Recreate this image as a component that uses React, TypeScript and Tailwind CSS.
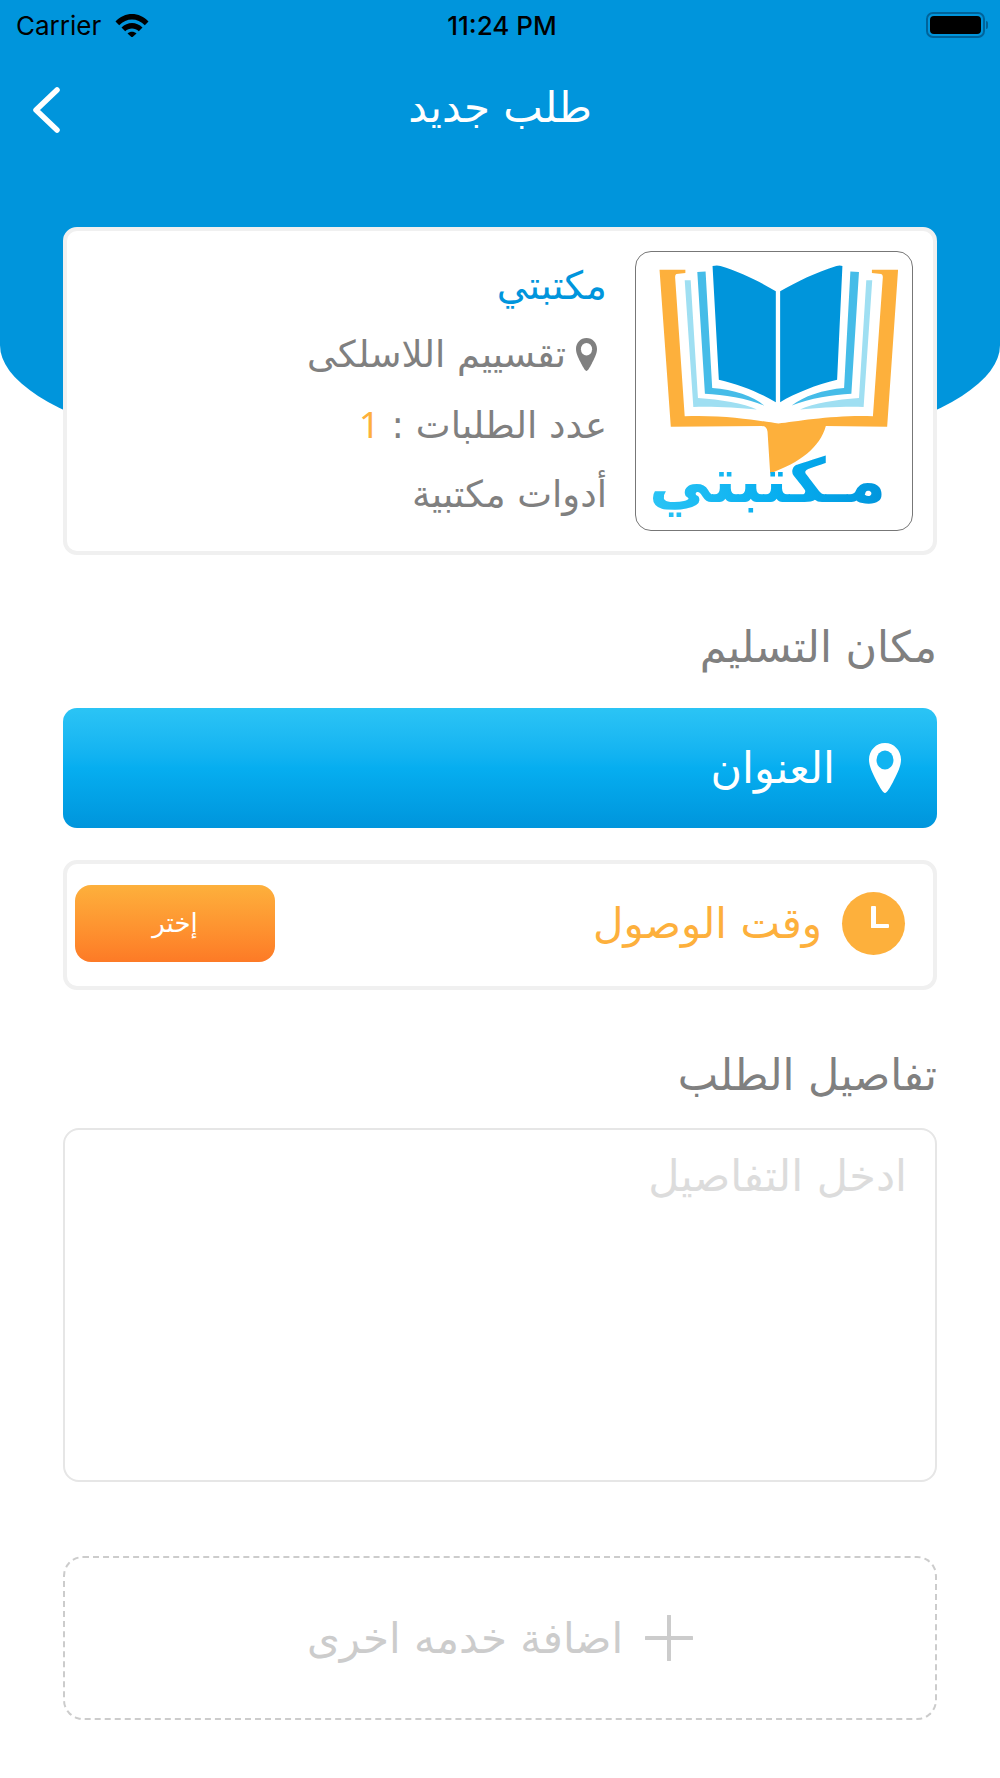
const Pin = ({ className, hole }: { className: string; hole: string }) => (
    <svg viewBox="0 0 32 50" className={className}>
        <path d="M16 0C7 0 0 7.500 0 16.500c0 8 5 16 8 22.500 3 5.500 6 11 8 11 2 0 5-5.500 8-11 3-6.500 8-14.500 8-22.500C32 7.500 25 0 16 0z" fill="currentColor" />
        <ellipse cx="16" cy="17" rx="8.500" ry="9.500" fill={hole} />
    </svg>
);

const StatusBar = () => (
    <div dir="ltr" className="flex h-[50px] items-center justify-between pl-[16px] pr-[12px] text-[26px] text-black font-['Inter',sans-serif]">
        <div className="flex w-[300px] items-center gap-[14px]">
            <span>Carrier</span>
            <svg viewBox="0 0 34 24" className="h-[24px] w-[34px]">
                <path d="M0.500 8.500C9.500-1.500 24.500-1.500 33.500 8.500L29.800 12.300C22.500 4.500 11.500 4.500 4.200 12.300z" fill="#000" />
                <path d="M6.500 14.500C12.500 8.500 21.500 8.500 27.500 14.500L23.800 18.200C20 14.500 14 14.500 10.200 18.200z" fill="#000" />
                <path d="M12.500 20.500C15 18.300 19 18.300 21.500 20.500L17 24.500z" fill="#000" />
            </svg>
        </div>
        <span className="font-medium">11:24 PM</span>
        <div className="flex w-[300px] items-center justify-end">
            <div className="flex h-[26px] w-[59px] items-center rounded-[7px] border-2 border-[#00639a] p-[2px]">
                <div className="h-full w-full rounded-[4px] bg-black" />
            </div>
            <div className="ml-[1px] h-[8px] w-[2px] rounded-r-sm bg-[#00639a]" />
        </div>
    </div>
);

const Logo = () => (
    <svg viewBox="75 80 833 838" className="h-full w-full">
        <defs>
            <linearGradient id="logoText" x1="0" x2="1" y1="0" y2="0">
                <stop offset="0" stopColor="#2bc4f5" />
                <stop offset="0.55" stopColor="#06aef0" />
                <stop offset="1" stopColor="#0095dc" />
            </linearGradient>
        </defs>
        <path
            d="M146 133L224 133L224 143L197 146Q193 147 193 155L222 575C350 570 450 590 505 597C560 590 680 570 790 575L820 155Q820 147 815 146L787 143L787 133L866 133L833 607L648 605C630 670 570 715 480 748L472 622Q470 605 455 605L180 607z"
            fill="#fdb03c"
        />
        <path d="M222 165L240 165L262 520C330 525 400 535 440 555C380 548 300 545 248 547z" fill="#9fdff2" />
        <path d="M788 165L770 165L748 520C680 525 610 535 570 555C630 548 710 545 762 547z" fill="#9fdff2" />
        <path d="M260 140L285 138L305 490C370 495 430 515 462 543C410 520 340 510 283 507z" fill="#45bce8" />
        <path d="M748 140L722 138L703 490C640 495 580 515 545 543C600 520 670 510 725 507z" fill="#45bce8" />
        <path d="M306 122Q320 118 330 122C390 140 450 170 497 198L497 533C450 505 390 480 325 465z" fill="#0095db" />
        <path d="M698 122Q690 118 680 122C620 140 560 170 510 198L510 533C555 505 620 480 682 465z" fill="#0095db" />
        <text
            x="472"
            y="835"
            textAnchor="middle"
            textLength="715"
            lengthAdjust="spacingAndGlyphs"
            fontSize="185"
            fontWeight="700"
            fontFamily="'DejaVu Sans', sans-serif"
            fill="url(#logoText)"
        >
            مـكتبتي
        </text>
    </svg>
);

const App = () => {
    return (
        <div dir="rtl" className="relative h-[1778px] w-full overflow-hidden bg-white font-['DejaVu_Sans',sans-serif]">
            {/* 상단 배경 */}
            <div className="absolute inset-x-0 top-0 h-[478px] rounded-b-[50%_133px] bg-[#0095dc]" />

            <div className="relative">
                <StatusBar />

                <div className="relative flex h-[115px] items-center justify-center text-[42px] text-white">
                    <span>طلب جديد</span>
                    <svg viewBox="0 0 28 46" className="absolute left-[32px] top-[37px] h-[46px] w-[28px]">
                        <path d="M25 3L4 23L25 43" fill="none" stroke="#fff" strokeWidth="5.500" strokeLinecap="round" strokeLinejoin="round" />
                    </svg>
                </div>

                <div className="flex flex-col px-[63px] pt-[62px]">
                    {/* 상점 카드 */}
                    <div className="flex h-[328px] gap-[28px] rounded-[14px] border-4 border-[#f0f0f0] bg-white p-[20px]">
                        <div className="h-[280px] w-[278px] shrink-0 overflow-hidden rounded-[16px] border border-[#777] bg-white">
                            <Logo />
                        </div>
                        <div className="flex flex-col text-[37px] leading-[69px] text-[#808080]">
                            <div className="text-[39px] text-[#0095dc]">مكتبتي</div>
                            <div className="flex items-center gap-[10px] pr-[10px]">
                                <Pin className="h-[33px] w-[21px] text-[#808080]" hole="#fff" />
                                <span>تقسييم اللاسلكى</span>
                            </div>
                            <div>
                                عدد الطلبات : <span className="font-['Noto_Sans',sans-serif] text-[#fdb03c]">1</span>
                            </div>
                            <div>أدوات مكتبية</div>
                        </div>
                    </div>

                    <h2 className="mt-[62px] text-[43px] leading-[60px] text-[#808080]">مكان التسليم</h2>

                    {/* 주소 버튼 */}
                    <div className="mt-[31px] flex h-[120px] items-center gap-[34px] rounded-[14px] bg-gradient-to-b from-[#2bc4f5] via-[#06aef0] to-[#0095dc] pr-[36px] text-[43px] text-white">
                        <Pin className="h-[50px] w-[32px] text-white" hole="#12b4f1" />
                        <span>العنوان</span>
                    </div>

                    {/* 도착 시간 */}
                    <div className="mt-[32px] flex h-[130px] items-center justify-between rounded-[14px] border-4 border-[#f0f0f0] pb-[4px] pl-[8px] pr-[28px]">
                        <div className="flex items-center gap-[20px]">
                            <div className="relative h-[63px] w-[63px] rounded-full bg-[#fdb03c]">
                                <div className="absolute left-[29px] top-[14px] h-[22px] w-[5px] rounded-[1px] bg-white" />
                                <div className="absolute left-[29px] top-[32px] h-[4px] w-[18px] rounded-[1px] bg-white" />
                            </div>
                            <span className="text-[42px] text-[#fdb03c]">وقت الوصول</span>
                        </div>
                        <button className="flex h-[77px] w-[200px] items-center justify-center rounded-[16px] bg-gradient-to-b from-[#fdb03c] to-[#fd7a26] text-[26px] text-white">
                            إختر
                        </button>
                    </div>

                    <h2 className="mt-[55px] text-[43px] leading-[60px] text-[#808080]">تفاصيل الطلب</h2>

                    {/* 상세 입력 */}
                    <textarea
                        placeholder="ادخل التفاصيل"
                        className="mt-[23px] h-[354px] resize-none rounded-[16px] border-2 border-[#e6e6e6] px-[28px] py-[14px] text-[43px] outline-none placeholder:text-[#dcdcdc]"
                    />

                    {/* 서비스 추가 */}
                    <button className="mt-[74px] flex h-[164px] items-center justify-center gap-[22px] rounded-[20px] border-2 border-dashed border-[#cccccc] text-[42px] text-[#cccccc]">
                        <svg viewBox="0 0 48 46" className="h-[46px] w-[48px]">
                            <path d="M24 1V45M1 23H47" fill="none" stroke="#cccccc" strokeWidth="4" strokeLinecap="round" />
                        </svg>
                        <span>اضافة خدمه اخرى</span>
                    </button>
                </div>
            </div>
        </div>
    );
};

export default App;
